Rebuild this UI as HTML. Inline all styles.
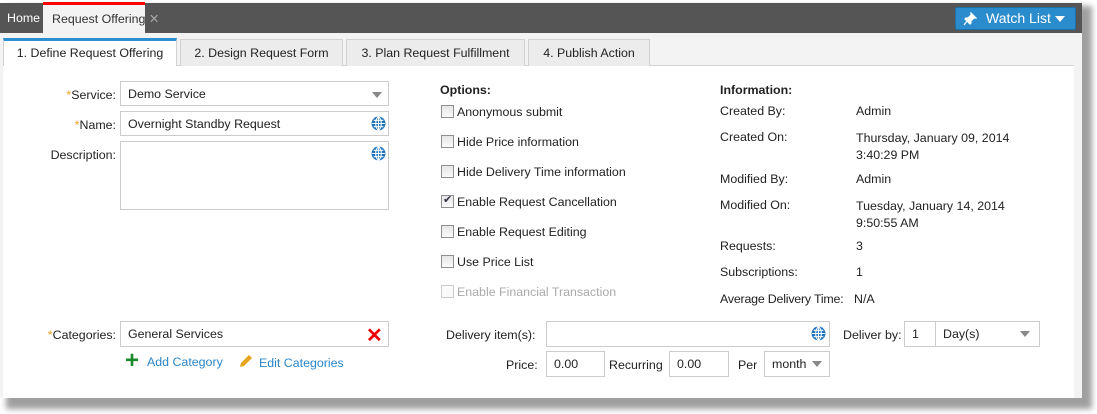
<!DOCTYPE html><html><head><style>
*{margin:0;padding:0;box-sizing:border-box}
body{width:1097px;height:414px;background:#fff;font-family:"Liberation Sans",Arial,sans-serif;font-size:12.4px;color:#222;position:relative;overflow:hidden}
.a{position:absolute;white-space:nowrap}
.inp{position:absolute;border:1px solid #ccc;background:#fff;padding-left:7px;line-height:23px;white-space:nowrap}
.tab{position:absolute;top:39px;height:27px;background:#ececec;border:1px solid #d2d2d2;border-bottom:none;line-height:26px;text-align:center;white-space:nowrap}
.cb{position:absolute;left:441px;width:13px;height:13px;border:1px solid #8f8f8f;background:linear-gradient(#e6e6e6,#fbfbfb)}
.ct{position:absolute;left:457px;white-space:nowrap}
.lab{position:absolute;text-align:right;width:110px;left:6px}
.r{color:#f0a020}
.arr{position:absolute;width:0;height:0;border-left:5px solid transparent;border-right:5px solid transparent;border-top:6px solid #888}
.gl{position:absolute;width:15px;height:15px}
</style></head><body>
<div class="a" style="left:6px;top:6px;width:1086px;height:403px;background:#888;filter:blur(3px);opacity:.8"></div>
<div class="a" style="left:0;top:3px;width:1082px;height:395px;background:#f3f3f3"></div>
<div class="a" style="left:0;top:3px;width:1082px;height:30px;background:#555"></div>
<div class="a" style="left:7px;top:11px;color:#fff">Home</div>
<div class="a" style="left:43px;top:5px;width:102px;height:28px;background:#f3f3f3"></div>
<div class="a" style="left:43px;top:2px;width:102px;height:3px;background:#f00"></div>
<div class="a" style="left:52px;top:11px;color:#333">Request Offering <span style="color:#aaa">✕</span></div>
<div class="a" style="left:955px;top:7px;width:121px;height:23px;background:#2a8ccd;border:1px solid #1d6fa8;border-radius:2px;color:#fff;font-size:14px;line-height:21px;padding-left:30px">Watch List</div>
<svg class="a" style="left:963px;top:12px" width="14" height="14" viewBox="0 0 14 14"><path d="M8 1l5 5-2 0-3 3 0 2-1 1-5-5 1-1 2 0 3-3z M4 9l-3 4" fill="#fff" stroke="#fff" stroke-width="1.2"/></svg>
<div class="arr" style="left:1055px;top:16px;border-top-color:#fff"></div>
<div class="a" style="left:3px;top:65px;width:1071px;height:333px;background:#fff;border-top:1px solid #d2d2d2"></div>
<div class="tab" style="left:3px;top:38px;height:28px;background:#fff;border-top:3px solid #2a8fd0;line-height:24px;width:174px">1. Define Request Offering</div>
<div class="tab" style="left:180px;width:163px">2. Design Request Form</div>
<div class="tab" style="left:346px;width:179px">3. Plan Request Fulfillment</div>
<div class="tab" style="left:528px;width:122px">4. Publish Action</div>

<div class="lab" style="top:88px"><span class="r">*</span>Service:</div>
<div class="inp" style="left:120px;top:81px;width:269px;height:25px;line-height:24px">Demo Service</div>
<div class="arr" style="left:372px;top:92px"></div>
<div class="lab" style="top:118px"><span class="r">*</span>Name:</div>
<div class="inp" style="left:120px;top:111px;width:269px;height:25px;line-height:24px">Overnight Standby Request</div>
<div class="lab" style="top:148px">Description:</div>
<div class="inp" style="left:120px;top:141px;width:269px;height:69px"></div>
<svg class="gl" style="left:371px;top:116px" viewBox="0 0 14 14"><circle cx="7" cy="7" r="6.5" fill="#1e73be"/><path d="M1 7h12M7 1v12M2.5 4h9M2.5 10h9M7 .5c-3.5 3-3.5 10 0 13M7 .5c3.5 3 3.5 10 0 13" stroke="#fff" stroke-width="1" fill="none"/></svg>
<svg class="gl" style="left:371px;top:146px" viewBox="0 0 14 14"><circle cx="7" cy="7" r="6.5" fill="#1e73be"/><path d="M1 7h12M7 1v12M2.5 4h9M2.5 10h9M7 .5c-3.5 3-3.5 10 0 13M7 .5c3.5 3 3.5 10 0 13" stroke="#fff" stroke-width="1" fill="none"/></svg>

<div class="lab" style="top:328px"><span class="r">*</span>Categories:</div>
<div class="inp" style="left:120px;top:321px;width:269px;height:26px;line-height:25px">General Services</div>
<div class="a" style="left:366px;top:323px;color:#e00;font-size:20px;font-weight:bold">✕</div>
<div class="a" style="left:125px;top:352px;color:#1b8a2a;font-size:24px;font-weight:bold;line-height:18px">+</div>
<div class="a" style="left:147px;top:355px;color:#2a86c8">Add Category</div>
<svg class="a" style="left:238px;top:353px" width="16" height="16" viewBox="0 0 16 16"><path d="M2 14l1-4 8-8 3 3-8 8z" fill="#e8a41c"/></svg>
<div class="a" style="left:259px;top:356px;color:#2a86c8">Edit Categories</div>

<div class="a" style="left:440px;top:83px;font-weight:bold">Options:</div>
<div class="cb" style="top:105px"></div><div class="ct" style="top:105px">Anonymous submit</div>
<div class="cb" style="top:135px"></div><div class="ct" style="top:135px">Hide Price information</div>
<div class="cb" style="top:165px"></div><div class="ct" style="top:165px">Hide Delivery Time information</div>
<div class="cb" style="top:195px"></div><div class="a" style="left:443px;top:193px;font-size:11px;color:#334">✔</div><div class="ct" style="top:195px">Enable Request Cancellation</div>
<div class="cb" style="top:225px"></div><div class="ct" style="top:225px">Enable Request Editing</div>
<div class="cb" style="top:255px"></div><div class="ct" style="top:255px">Use Price List</div>
<div class="cb" style="top:285px;border-color:#ccc;background:#fafafa"></div><div class="ct" style="top:285px;color:#aaa">Enable Financial Transaction</div>

<div class="a" style="left:720px;top:83px;font-weight:bold">Information:</div>
<div class="a" style="left:720px;top:104px">Created By:</div><div class="a" style="left:856px;top:104px">Admin</div>
<div class="a" style="left:720px;top:130px">Created On:</div><div class="a" style="left:856px;top:130px;line-height:17px">Thursday, January 09, 2014<br>3:40:29 PM</div>
<div class="a" style="left:720px;top:172px">Modified By:</div><div class="a" style="left:856px;top:172px">Admin</div>
<div class="a" style="left:720px;top:198px">Modified On:</div><div class="a" style="left:856px;top:198px;line-height:17px">Tuesday, January 14, 2014<br>9:50:55 AM</div>
<div class="a" style="left:720px;top:239px">Requests:</div><div class="a" style="left:856px;top:239px">3</div>
<div class="a" style="left:720px;top:265px">Subscriptions:</div><div class="a" style="left:856px;top:265px">1</div>
<div class="a" style="left:720px;top:292px;letter-spacing:-0.2px">Average Delivery Time:</div><div class="a" style="left:854px;top:292px">N/A</div>

<div class="a" style="left:446px;top:328px">Delivery item(s):</div>
<div class="inp" style="left:546px;top:321px;width:284px;height:26px"></div>
<svg class="gl" style="left:811px;top:326px" viewBox="0 0 14 14"><circle cx="7" cy="7" r="6.5" fill="#1e73be"/><path d="M1 7h12M7 1v12M2.5 4h9M2.5 10h9M7 .5c-3.5 3-3.5 10 0 13M7 .5c3.5 3 3.5 10 0 13" stroke="#fff" stroke-width="1" fill="none"/></svg>
<div class="a" style="left:843px;top:328px">Deliver by:</div>
<div class="inp" style="left:904px;top:321px;width:32px;height:26px;line-height:25px">1</div>
<div class="inp" style="left:935px;top:321px;width:105px;height:26px;line-height:25px">Day(s)</div>
<div class="arr" style="left:1020px;top:331px"></div>
<div class="a" style="left:506px;top:358px">Price:</div>
<div class="inp" style="left:546px;top:351px;width:59px;height:26px;line-height:25px">0.00</div>
<div class="a" style="left:609px;top:358px">Recurring</div>
<div class="inp" style="left:669px;top:351px;width:60px;height:26px;line-height:25px">0.00</div>
<div class="a" style="left:738px;top:358px">Per</div>
<div class="inp" style="left:764px;top:351px;width:66px;height:26px;line-height:25px;overflow:hidden;padding-right:24px">month</div>
<div class="a" style="left:806px;top:352px;width:22px;height:24px;background:#fff"></div>
<div class="arr" style="left:812px;top:361px"></div>
</body></html>
